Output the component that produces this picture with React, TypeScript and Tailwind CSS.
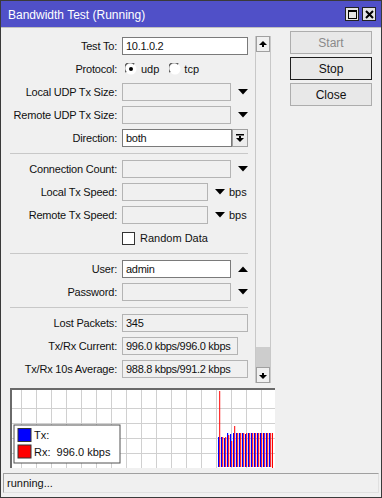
import type { ReactNode } from 'react'

const DownTri = () => (
  <svg width="10" height="6" viewBox="0 0 10 6" className="block">
    <polygon points="0,0 10,0 5,5.5" fill="#000" />
  </svg>
)

const UpTri = () => (
  <svg width="10" height="6" viewBox="0 0 10 6" className="block">
    <polygon points="0,6 10,6 5,0.5" fill="#000" />
  </svg>
)

function Row({ label, children }: { label: string; children: ReactNode }) {
  return (
    <div className="flex h-[18px] items-center">
      <div className="w-[108px] shrink-0 whitespace-nowrap pr-[1px] text-right tracking-[-0.2px]">{label}</div>
      <div className="ml-[4px] flex items-center">{children}</div>
    </div>
  )
}

function Field({ value = '', width, active }: { value?: string; width: string; active?: boolean }) {
  return (
    <div
      className={`${width} h-[18px] overflow-hidden border px-[3px] leading-[16px] tracking-[-0.3px] whitespace-nowrap ${
        active ? 'border-[#7a7a7a] bg-white' : 'border-[#b4b4b4] bg-[#f0f0f0]'
      }`}
    >
      {value}
    </div>
  )
}

function Radio({ checked }: { checked?: boolean }) {
  return (
    <svg width="12" height="12" viewBox="0 0 12 12" className="block">
      <circle cx="6" cy="6" r="5.5" fill="#fff" />
      <path d="M1.2 9.2 A5.5 5.5 0 0 1 9.2 1.2" stroke="#5a5a5a" strokeWidth="1.3" fill="none" />
      {checked && <circle cx="6" cy="6" r="2" fill="#000" />}
    </svg>
  )
}

const Separator = () => <div className="my-px h-px w-[238px] bg-[#c8c8c8]" />

const blueTops = [437, 437, 438, 433, 434, 433, 433, 433, 433, 434, 433, 433, 433, 433, 433, 433, 433, 433]
const redTops = [391, 437, 437, 435, 441, 426, 433, 433, 433, 433, 433, 433, 433, 433, 433, 433, 433, 433]

function Graph() {
  const vLines = Array.from({ length: 18 }, (_, i) => 9 + 15 * i)
  const hLines = [18, 33, 48, 63, 78]
  return (
    <div className="mx-[9px] h-[80px] w-[265px] border-l-2 border-t-2 border-l-[#6a6a6a] border-t-[#6a6a6a] bg-white">
      <svg width="263" height="78" viewBox="0 0 263 78" className="block">
        {vLines.map((x) => (
          <rect key={`v${x}`} x={x} y="0" width="1" height="78" fill="#d0d0d0" />
        ))}
        {hLines.map((y) => (
          <rect key={`h${y}`} x="0" y={y} width="263" height="1" fill="#d0d0d0" />
        ))}
        {blueTops.map((t, i) => (
          <g key={i}>
            <rect x={206 + 3 * i} y={t - 390} width="1.2" height={467 - t} fill="#0000ff" />
            <rect x={207.2 + 3 * i} y={redTops[i] - 390} width="1" height={467 - redTops[i]} fill="#ff0000" />
          </g>
        ))}
        <rect x={260} y={43} width="1" height="35" fill="#ff0000" />
        <rect x="2" y="35" width="106" height="38" fill="#fff" stroke="#505050" strokeWidth="1" />
        <rect x="6" y="38.5" width="13" height="13" fill="#0000ff" stroke="#333" strokeWidth="1" />
        <rect x="6" y="55" width="13" height="13" fill="#ff0000" stroke="#333" strokeWidth="1" />
        <text x="22" y="49" fontSize="11" fontFamily="Liberation Sans, Arial, sans-serif" fill="#111">
          Tx:
        </text>
        <text x="22" y="66" fontSize="11" fontFamily="Liberation Sans, Arial, sans-serif" fill="#111" xmlSpace="preserve">
          Rx:  996.0 kbps
        </text>
      </svg>
    </div>
  )
}

function Scrollbar() {
  return (
    <div className="mt-[-1px] flex h-[347px] w-[16px] flex-col border-x border-[#c8c8c8] bg-[#f0f0f0]">
      <div className="flex h-[16px] items-center justify-center border border-[#a0a0a0] bg-[#f0f0f0]">
        <svg width="8" height="7" viewBox="0 0 8 7">
          <polygon points="0,4 8,4 4,0" fill="#000" />
          <rect x="3" y="4" width="2" height="2" fill="#000" />
        </svg>
      </div>
      <div className="flex-1" />
      <div className="h-[20px] bg-[#cdcdcd]" />
      <div className="flex h-[16px] items-center justify-center border border-[#a0a0a0] bg-[#f0f0f0]">
        <svg width="8" height="7" viewBox="0 0 8 7">
          <rect x="3" y="1" width="2" height="2" fill="#000" />
          <polygon points="0,3 8,3 4,7" fill="#000" />
        </svg>
      </div>
    </div>
  )
}

function Button({ label, disabled, focused }: { label: string; disabled?: boolean; focused?: boolean }) {
  return (
    <div
      className={`flex h-[23px] w-[82px] items-center justify-center border text-[12px] ${
        focused ? 'border-[#1e1e1e]' : 'border-[#adadad]'
      } bg-[#e8e8e8] ${disabled ? 'text-[#8a8a8a]' : 'text-[#111]'}`}
    >
      {label}
    </div>
  )
}

export default function App() {
  return (
    <div className="flex h-[498px] w-[382px] flex-col border border-[#3a3a3a] bg-[#f0f0f0] font-['Liberation_Sans',Arial,sans-serif] text-[11px] text-[#111]">
      <div className="flex h-[27px] items-center border-b border-[#c0c0c0] bg-[#5050c8] pl-[7px] pr-[5px]">
        <span className="flex-1 pt-[1px] text-[12px] text-white">Bandwidth Test (Running)</span>
        <div className="flex gap-[3px]">
          <div className="flex h-[14px] w-[14px] items-center justify-center border border-[#222] bg-[#e4e4e4]">
            <div className="h-[9px] w-[9px] border border-t-2 border-black" />
          </div>
          <div className="flex h-[14px] w-[14px] items-center justify-center border border-[#222] bg-[#e4e4e4]">
            <svg width="9" height="9" viewBox="0 0 9 9">
              <path d="M1 1 L8 8 M8 1 L1 8" stroke="#000" strokeWidth="2" />
            </svg>
          </div>
        </div>
      </div>

      <div className="flex">
        <div className="flex pl-[9px] pt-[9px]">
          <div className="flex w-[239px] flex-col gap-[5px]">
            <Row label="Test To:">
              <Field value="10.1.0.2" width="w-[126px]" active />
            </Row>
            <Row label="Protocol:">
              <div className="flex items-center pl-[3px]">
                <Radio checked />
                <span className="ml-[4px]">udp</span>
                <div className="ml-[10px]">
                  <Radio />
                </div>
                <span className="ml-[3px]">tcp</span>
              </div>
            </Row>
            <Row label="Local UDP Tx Size:">
              <Field width="w-[109px]" />
              <div className="ml-[7px]">
                <DownTri />
              </div>
            </Row>
            <Row label="Remote UDP Tx Size:">
              <Field width="w-[109px]" />
              <div className="ml-[7px]">
                <DownTri />
              </div>
            </Row>
            <Row label="Direction:">
              <Field value="both" width="w-[110px]" active />
              <div className="flex h-[18px] w-[16px] items-center justify-center border border-[#a0a0a0] bg-[#ececec]">
                <svg width="8" height="8" viewBox="0 0 8 8">
                  <rect x="0" y="0" width="8" height="1.5" fill="#000" />
                  <rect x="3" y="2" width="2" height="2" fill="#000" />
                  <polygon points="0,4 8,4 4,8" fill="#000" />
                </svg>
              </div>
            </Row>
            <Separator />
            <Row label="Connection Count:">
              <Field width="w-[109px]" />
              <div className="ml-[7px]">
                <DownTri />
              </div>
            </Row>
            <Row label="Local Tx Speed:">
              <Field width="w-[86px]" />
              <div className="ml-[7px]">
                <DownTri />
              </div>
              <span className="ml-[4px]">bps</span>
            </Row>
            <Row label="Remote Tx Speed:">
              <Field width="w-[86px]" />
              <div className="ml-[7px]">
                <DownTri />
              </div>
              <span className="ml-[4px]">bps</span>
            </Row>
            <Row label="">
              <div className="h-[13px] w-[13px] border border-[#333] bg-white" />
              <span className="ml-[5px]">Random Data</span>
            </Row>
            <Separator />
            <Row label="User:">
              <Field value="admin" width="w-[109px]" active />
              <div className="ml-[7px]">
                <UpTri />
              </div>
            </Row>
            <Row label="Password:">
              <Field width="w-[109px]" />
              <div className="ml-[7px]">
                <DownTri />
              </div>
            </Row>
            <Separator />
            <Row label="Lost Packets:">
              <Field value="345" width="w-[126px]" />
            </Row>
            <Row label="Tx/Rx Current:">
              <Field value="996.0 kbps/996.0 kbps" width="w-[116px]" />
            </Row>
            <Row label="Tx/Rx 10s Average:">
              <Field value="988.8 kbps/991.2 kbps" width="w-[126px]" />
            </Row>
          </div>
          <div className="ml-[6px]">
            <Scrollbar />
          </div>
        </div>
        <div className="ml-[19px] flex flex-col gap-[3px] pt-[3px]">
          <Button label="Start" disabled />
          <Button label="Stop" focused />
          <Button label="Close" />
        </div>
      </div>

      <div className="mt-[5px]">
        <Graph />
      </div>

      <div className="mx-[2px] mt-[5px] h-[20px] border border-t-[#a0a0a0] border-l-[#a0a0a0] border-r-[#e0e0e0] border-b-[#e0e0e0] pl-[3px] leading-[18px]">
        running...
      </div>
    </div>
  )
}
